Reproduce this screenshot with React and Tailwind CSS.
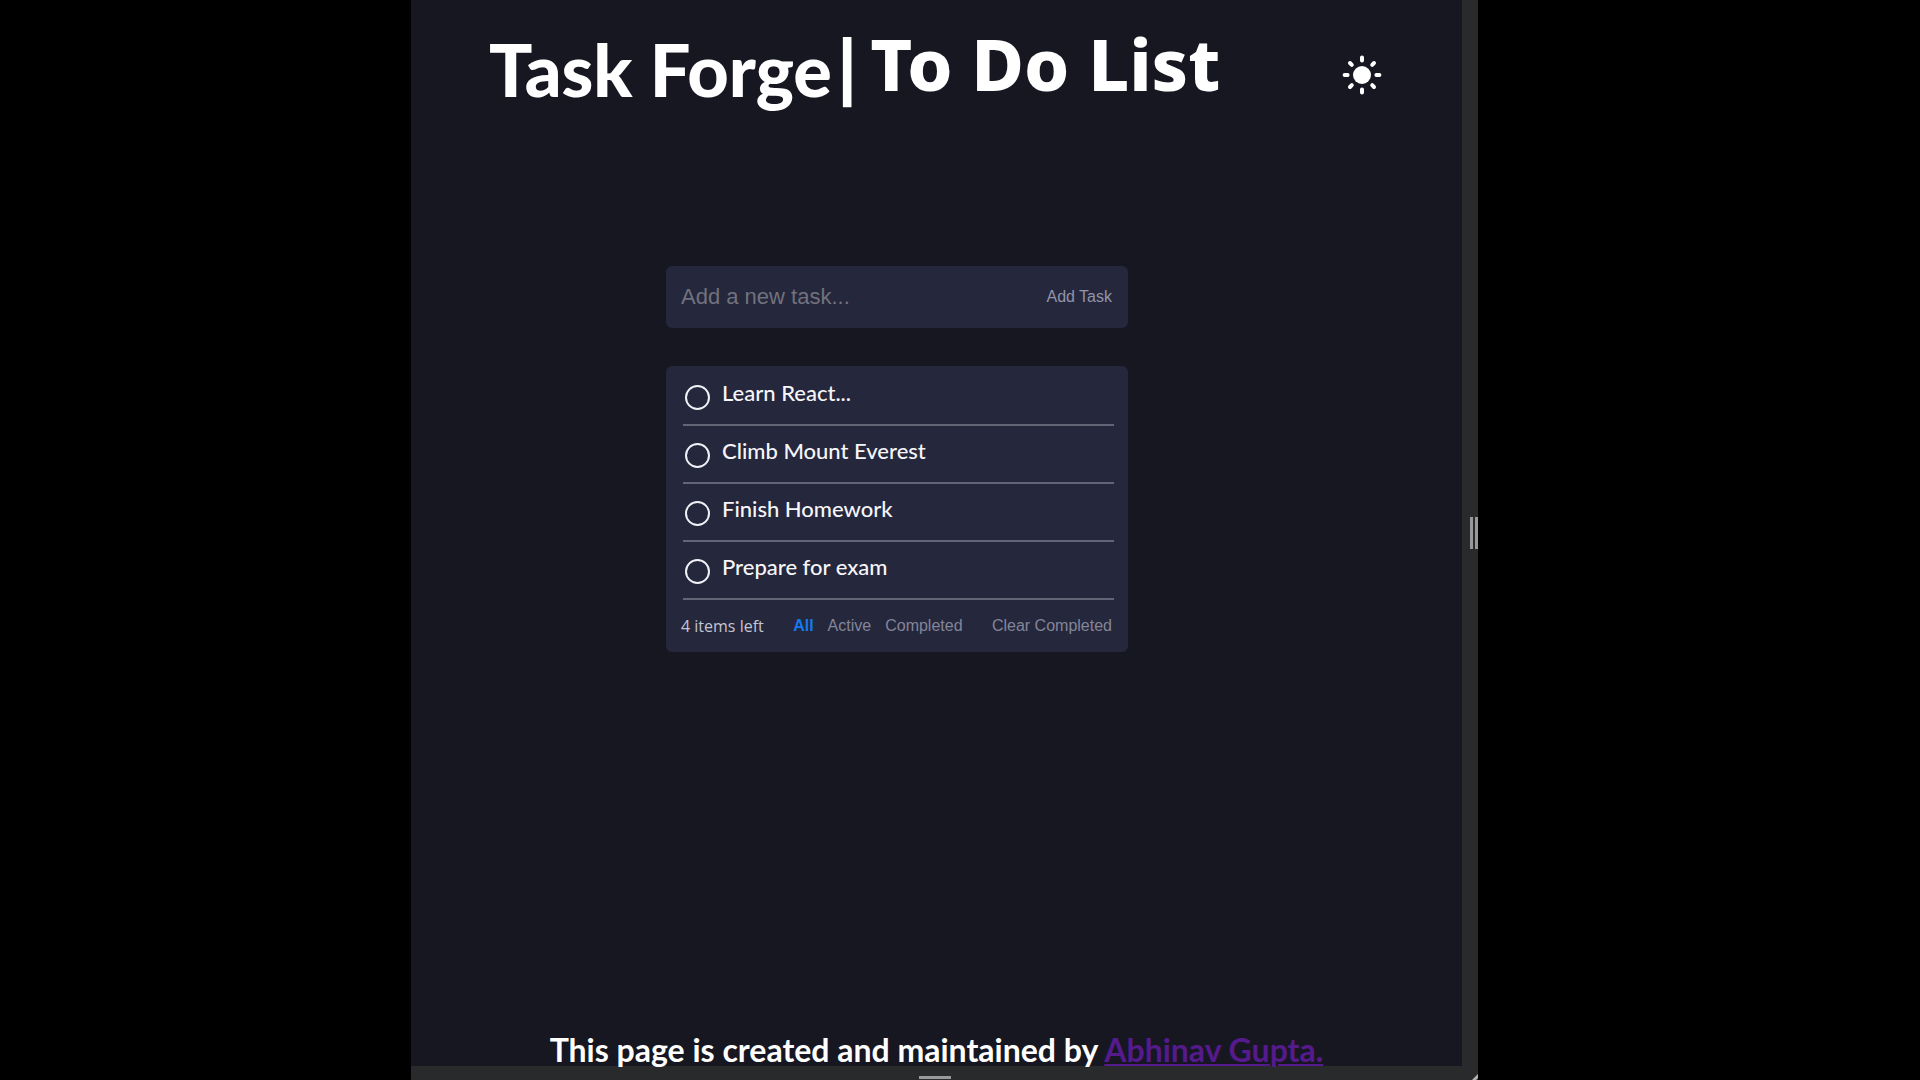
import { useState } from "react";

const initialTasks = [
  { id: 1, title: "Learn React...", done: false },
  { id: 2, title: "Climb Mount Everest", done: false },
  { id: 3, title: "Finish Homework", done: false },
  { id: 4, title: "Prepare for exam", done: false },
];

const filters = ["All", "Active", "Completed"];

function SunIcon() {
  return (
    <svg viewBox="0 0 40 40" className="size-10" fill="currentColor" stroke="currentColor" aria-hidden="true">
      <circle cx="20" cy="20" r="9" stroke="none" />
      <g strokeWidth="4" strokeLinecap="round">
        <path d="M20 2.6v3M20 34.4v3M2.6 20h3M34.4 20h3" />
        <path d="M8 8l1.8 1.8M30.2 30.2L32 32M8 32l1.8-1.8M30.2 9.8L32 8" />
      </g>
    </svg>
  );
}

function Header() {
  return (
    <header className="flex h-[150px] items-center justify-between pr-20 pl-[78px]">
      <h1 className="flex items-start pb-4 whitespace-nowrap text-white">
        <span className="pt-1 font-['Lato',sans-serif] text-[72px] leading-[80px] font-black">Task Forge</span>
        <span className="-ml-1 flex gap-1 font-['Noto_Sans',sans-serif] text-[72px] leading-[76px] font-extrabold">
          <span>|</span>
          <span>To Do List</span>
        </span>
      </h1>
      <button type="button" aria-label="Toggle theme" className="text-white">
        <SunIcon />
      </button>
    </header>
  );
}

function TaskRow({ task, onToggle }) {
  return (
    <li className="flex h-[58px] items-center border-b-2 border-[#636577] pb-0.5 pl-0.5">
      <input
        id={`task-${task.id}`}
        type="checkbox"
        checked={task.done}
        onChange={onToggle}
        className="mt-1 size-[25px] appearance-none rounded-full border-2 border-[#f1f1f8] checked:bg-[#1675f0]"
      />
      <label htmlFor={`task-${task.id}`} className="-mt-1 ml-3 font-['Lato',sans-serif] text-[22px] leading-7 font-medium text-[#f6f6fa]">
        {task.title}
      </label>
    </li>
  );
}

export default function App() {
  const [tasks, setTasks] = useState(initialTasks);
  const [filter, setFilter] = useState("All");
  const [draft, setDraft] = useState("");

  const visible = tasks.filter((t) => filter === "All" || (filter === "Completed" ? t.done : !t.done));
  const toggle = (id) => setTasks(tasks.map((t) => (t.id === id ? { ...t, done: !t.done } : t)));
  const addTask = (e) => {
    e.preventDefault();
    if (!draft.trim()) return;
    setTasks([...tasks, { id: Date.now(), title: draft, done: false }]);
    setDraft("");
  };

  return (
    <div className="grid min-h-screen grid-cols-[411fr_1067fr_442fr] bg-black">
      <div className="col-start-2 grid grid-cols-[1fr_16px] grid-rows-[1fr_14px] bg-[#292a2b]">
        <div className="flex flex-col bg-[#171722]">
          <Header />

          <main className="mt-[116px] ml-[255px] w-[462px] font-['Liberation_Sans',Arial,sans-serif]">
            <form onSubmit={addTask} className="flex h-[62px] items-center rounded-md bg-[#25273c] pr-4 pl-[15px]">
              <input
                type="text"
                aria-label="New task"
                placeholder="Add a new task..."
                value={draft}
                onChange={(e) => setDraft(e.target.value)}
                className="min-w-0 flex-1 bg-transparent text-[22px] leading-7 text-white outline-none placeholder:text-[#71727d]"
              />
              <button type="submit" className="text-base text-[#9394a8]">
                Add Task
              </button>
            </form>

            <section className="mt-[38px] rounded-md bg-[#25273c]">
              <ul className="mr-3.5 ml-[17px] pt-0.5">
                {visible.map((task) => (
                  <TaskRow key={task.id} task={task} onToggle={() => toggle(task.id)} />
                ))}
              </ul>
              <div className="flex h-[52px] items-center justify-between pr-4 pl-[15px] text-base text-[#83859a]">
                <span className="font-['Open_Sans',sans-serif] text-[#c4c5d2]">
                  {tasks.filter((t) => !t.done).length} items left
                </span>
                <div className="flex gap-3.5">
                  {filters.map((name) => (
                    <button
                      key={name}
                      type="button"
                      onClick={() => setFilter(name)}
                      className={name === filter ? "font-bold text-[#1677f2]" : ""}
                    >
                      {name}
                    </button>
                  ))}
                </div>
                <button type="button" onClick={() => setTasks(tasks.filter((t) => !t.done))}>
                  Clear Completed
                </button>
              </div>
            </section>
          </main>

          <footer className="mt-auto text-center font-['Lato',sans-serif] text-[32px] leading-8 font-bold whitespace-nowrap text-white">
            This page is created and maintained by{" "}
            <a href="#author" className="text-[#551a8b] underline decoration-2 underline-offset-2">
              Abhinav Gupta.
            </a>
          </footer>
        </div>

        <div className="flex items-center justify-end gap-0.5">
          <span className="h-8 w-[3px] bg-[#98999a]" />
          <span className="h-8 w-[3px] bg-[#98999a]" />
        </div>

        <div className="flex items-end justify-center pr-1 pb-px">
          <span className="h-[3px] w-8 bg-[#98999a]" />
        </div>

        <div className="flex items-end justify-end">
          <svg viewBox="0 0 6 6" className="size-1.5" aria-hidden="true">
            <path d="M0 6L6 0v4L4 6z" fill="#b5b5b5" />
          </svg>
        </div>
      </div>
    </div>
  );
}
